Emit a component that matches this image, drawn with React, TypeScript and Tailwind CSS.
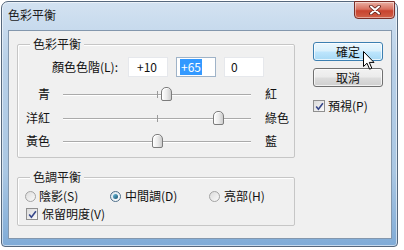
import React from "react";

const FONT = "font-['Noto_Sans_CJK_TC','Noto_Sans',sans-serif]";

function Thumb({ v }: { v: number }) {
  const left = 94 + v * 0.94 - 5.5;
  return (
    <div
      className="absolute top-[3px] h-[14px] w-[11px] rounded-t-[5px] rounded-b-[2px] border border-[#7c7c7c] bg-gradient-to-r from-[#fefefe] via-[#ececec] to-[#cdcdcd] shadow-[inset_1px_1px_0_#fff]"
      style={{ left }}
    />
  );
}

function SliderRow({ l, r, v, h }: { l: string; r: string; v: number; h: string }) {
  return (
    <div className={`flex items-start ${h}`}>
      <div className="w-[32px] pt-[2px] text-right leading-[16px]">{l}</div>
      <div className="relative ml-[13px] h-full w-[188px]">
        <div className="absolute left-0 right-0 top-[10px] h-[1px] bg-[#aaaaaa] shadow-[0_1px_0_#ffffff]" />
        <div className="absolute left-[94px] top-[7px] h-[7px] w-[1px] bg-[#9a9a9a]" />
        <Thumb v={v} />
      </div>
      <div className="ml-[14px] pt-[2px] leading-[16px]">{r}</div>
    </div>
  );
}

function Radio({ on }: { on?: boolean }) {
  return (
    <span
      className={`flex h-[11px] w-[11px] items-center justify-center rounded-full border ${
        on ? "border-[#4f6f8a] bg-gradient-to-br from-[#d8e4ec] to-[#ffffff]" : "border-[#a3a3a3] bg-gradient-to-br from-[#dcdcdc] to-[#fafafa]"
      }`}
    >
      {on && <span className="h-[5px] w-[5px] rounded-full bg-gradient-to-br from-[#6cc0de] to-[#17506f]" />}
    </span>
  );
}

function Check() {
  return (
    <span className="flex h-[12px] w-[12px] items-center justify-center border border-[#8f8f8f] bg-gradient-to-br from-[#dadada] to-[#fbfbfb]">
      <svg width="9" height="9" viewBox="0 0 9 9">
        <path d="M1.2 4.6 L3.4 7.2 L7.9 1.2" stroke="#36478a" strokeWidth="1.6" fill="none" />
      </svg>
    </span>
  );
}

function Legend({ children }: { children: React.ReactNode }) {
  return (
    <div className="-mt-[9px] ml-[12px] w-fit bg-[#f0f0f0] px-[3px] leading-[16px] text-[#1a1a1a]">{children}</div>
  );
}

export default function App() {
  return (
    <div className={`relative h-[250px] w-[404px] overflow-hidden bg-white text-[12px] text-[#111] ${FONT}`}>
      <div className="ml-[1px] mt-[1px] flex h-[246px] w-[397px] flex-col rounded-t-[7px] rounded-b-[4px] border border-[#56687d] bg-[linear-gradient(180deg,#d3e2f1_0%,#b8d0e8_25%,#aac7e3_70%,#7fabd7_100%)] shadow-[inset_0_0_0_1px_rgba(255,255,255,0.55)]">
        {/* title bar */}
        <div className="flex h-[28px] items-start justify-between">
          <div className="pl-[6px] pt-[5px] leading-[16px] text-[#1b1b1b]">色彩平衡</div>
          <div className="-mt-[1px] mr-[2px] flex h-[18px] w-[41px] items-center justify-center rounded-b-[4px] border border-[#7a2f28] bg-[linear-gradient(180deg,#eab0a3_0%,#d8705f_45%,#c8432f_55%,#d06048_100%)] shadow-[inset_0_0_0_1px_rgba(255,255,255,0.45)]">
            <svg width="12" height="10" viewBox="0 0 12 10">
              <path d="M2 1.5 L10 8.5 M10 1.5 L2 8.5" stroke="#5a1f18" strokeWidth="3.6" strokeLinecap="round" />
              <path d="M2 1.5 L10 8.5 M10 1.5 L2 8.5" stroke="#ffffff" strokeWidth="2" strokeLinecap="round" />
            </svg>
          </div>
        </div>

        {/* content */}
        <div className="ml-[6px] flex h-[209px] w-[384px] items-start border border-[#8397ad] bg-[#f0f0f0]">
          {/* left column */}
          <div className="flex flex-col pl-[8px]">
            {/* group 1 */}
            <div className="mt-[13px] w-[278px] rounded-[2px] border border-[#c6c6c6] pb-[3px] shadow-[inset_1px_1px_0_#fff]">
              <Legend>色彩平衡</Legend>
              <div className="mt-[5px] flex h-[20px] items-center">
                <div className="w-[110px] pr-[10px] text-right leading-[16px]">顏色色階(L):</div>
                <div className="flex gap-[8px]">
                  <div className="flex h-[20px] w-[40px] items-center border border-[#e6e8ec] bg-white pl-[8px] leading-[16px]">+10</div>
                  <div className="flex h-[20px] w-[40px] items-center border border-[#9fb3c8] bg-white pl-[3px] leading-[16px]">
                    <span className="bg-[#3399ff] px-[1px] text-white">+65</span>
                  </div>
                  <div className="flex h-[20px] w-[40px] items-center border border-[#e6e8ec] bg-white pl-[6px] leading-[16px]">0</div>
                </div>
              </div>
              <div className="mt-[7px] flex flex-col">
                <SliderRow l="青" r="紅" v={10} h="h-[24px]" />
                <SliderRow l="洋紅" r="綠色" v={65} h="h-[23px]" />
                <SliderRow l="黃色" r="藍" v={0} h="h-[23px]" />
              </div>
            </div>

            {/* group 2 */}
            <div className="mt-[19px] w-[278px] rounded-[2px] border border-[#c6c6c6] pb-[2px] shadow-[inset_1px_1px_0_#fff]">
              <Legend>色調平衡</Legend>
              <div className="ml-[7px] mt-[2px] flex h-[18px] items-center">
                <div className="flex w-[85px] items-center gap-[3px]">
                  <Radio />
                  <span className="leading-[16px]">陰影(S)</span>
                </div>
                <div className="flex w-[99px] items-center gap-[4px]">
                  <Radio on />
                  <span className="leading-[16px]">中間調(D)</span>
                </div>
                <div className="flex items-center gap-[4px]">
                  <Radio />
                  <span className="leading-[16px]">亮部(H)</span>
                </div>
              </div>
              <div className="ml-[8px] flex h-[18px] items-center gap-[4px]">
                <Check />
                <span className="leading-[16px]">保留明度(V)</span>
              </div>
            </div>
          </div>

          {/* right column */}
          <div className="ml-[18px] flex flex-col">
            <div className="mt-[11px] flex h-[19px] w-[70px] items-center justify-center rounded-[3px] border border-[#3c7fb1] bg-[linear-gradient(180deg,#eaf6fd_0%,#d9f0fc_48%,#bee6fd_52%,#a7d9f5_100%)] leading-[16px] shadow-[inset_0_0_0_1px_rgba(255,255,255,0.7)]">
              確定
            </div>
            <div className="mt-[7px] flex h-[19px] w-[70px] items-center justify-center rounded-[3px] border border-[#707070] bg-[linear-gradient(180deg,#f2f2f2_0%,#ebebeb_48%,#dddddd_52%,#cfcfcf_100%)] leading-[16px] shadow-[inset_0_0_0_1px_rgba(255,255,255,0.7)]">
              取消
            </div>
            <div className="mt-[10px] flex h-[18px] items-center gap-[3px]">
              <Check />
              <span className="leading-[16px]">預視(P)</span>
            </div>
          </div>
        </div>
      </div>

      {/* mouse cursor */}
      <svg className="absolute left-[363px] top-[51px]" width="13" height="20" viewBox="0 0 13 20">
        <path
          d="M0.5 0.5 L0.5 15.5 L4 12.2 L6.6 18.2 L8.8 17.2 L6.3 11.4 L11 11.4 Z"
          fill="#ffffff"
          stroke="#000000"
          strokeWidth="1"
          strokeLinejoin="round"
        />
      </svg>
    </div>
  );
}
